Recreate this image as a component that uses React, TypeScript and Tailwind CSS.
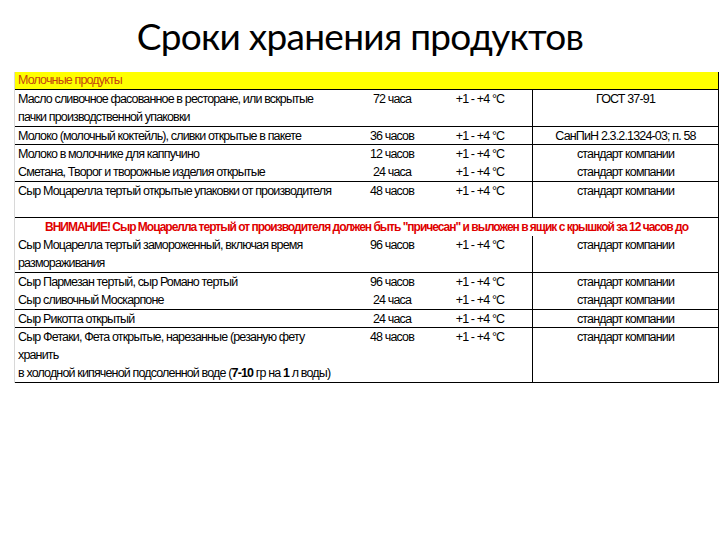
import React from 'react';
import clsx from 'clsx';

type Row = {
  name: React.ReactNode;
  time?: string;
  temp?: string;
  norm?: string;
  h: string;
  border: boolean;
};

const rows: Row[] = [
  {
    name: (
      <>
        Масло сливочное фасованное в ресторане, или вскрытые
        <br />
        пачки производственной упаковки
      </>
    ),
    time: '72 часа',
    temp: '+1 - +4 °C',
    norm: 'ГОСТ 37-91',
    h: 'h-[36px]',
    border: true,
  },
  {
    name: 'Молоко (молочный коктейль), сливки открытые в пакете',
    time: '36 часов',
    temp: '+1 - +4 °C',
    norm: 'СанПиН 2.3.2.1324-03; п. 58',
    h: 'h-[17px]',
    border: true,
  },
  {
    name: 'Молоко в молочнике для каппучино',
    time: '12 часов',
    temp: '+1 - +4 °C',
    norm: 'стандарт компании',
    h: 'h-[18px]',
    border: false,
  },
  {
    name: 'Сметана, Творог и творожные изделия открытые',
    time: '24 часа',
    temp: '+1 - +4 °C',
    norm: 'стандарт компании',
    h: 'h-[18px]',
    border: true,
  },
  {
    name: 'Сыр Моцарелла тертый открытые упаковки от производителя',
    time: '48 часов',
    temp: '+1 - +4 °C',
    norm: 'стандарт компании',
    h: 'h-[35px]',
    border: true,
  },
];

const rows2: Row[] = [
  {
    name: (
      <>
        Сыр Моцарелла тертый замороженный, включая время
        <br />
        размораживания
      </>
    ),
    time: '96 часов',
    temp: '+1 - +4 °C',
    norm: 'стандарт компании',
    h: 'h-[36px]',
    border: true,
  },
  {
    name: 'Сыр Пармезан тертый, сыр Романо тертый',
    time: '96 часов',
    temp: '+1 - +4 °C',
    norm: 'стандарт компании',
    h: 'h-[18px]',
    border: false,
  },
  {
    name: 'Сыр сливочный Москарпоне',
    time: '24 часа',
    temp: '+1 - +4 °C',
    norm: 'стандарт компании',
    h: 'h-[18px]',
    border: true,
  },
  {
    name: 'Сыр Рикотта открытый',
    time: '24 часа',
    temp: '+1 - +4 °C',
    norm: 'стандарт компании',
    h: 'h-[17px]',
    border: true,
  },
  {
    name: (
      <>
        Сыр Фетаки, Фета открытые, нарезанные (резаную фету
        <br />
        хранить
        <br />в холодной кипяченой подсоленной воде (<b>7-10</b> гр на <b>1</b> л воды)
      </>
    ),
    time: '48 часов',
    temp: '+1 - +4 °C',
    norm: 'стандарт компании',
    h: 'h-[54px]',
    border: true,
  },
];

function TableRow({ row }: { row: Row }) {
  return (
    <div className={clsx('flex box-content', row.h, row.border && 'border-b border-black')}>
      <div className="w-[341px] pl-[3px] whitespace-nowrap">{row.name}</div>
      <div className="w-[72px] text-center whitespace-nowrap">{row.time}</div>
      <div className="w-[104px] text-center whitespace-nowrap">{row.temp}</div>
      <div className="w-[186px] border-l border-black text-center whitespace-nowrap">{row.norm}</div>
    </div>
  );
}

export default function App() {
  return (
    <div className="w-[720px] h-[540px] bg-white overflow-hidden">
      <h1
        className="text-center text-[37px] leading-[46px] pt-[13px] tracking-[-0.7px] text-black"
        style={{ fontFamily: 'Lato, "Open Sans", sans-serif' }}
      >
        Сроки хранения продуктов
      </h1>

      <div
        className="ml-[14px] mt-[13px] w-[705px] border-r border-l border-r-black border-l-[#d8d8d8] text-[12.5px] leading-[18px] tracking-[-0.85px] text-black"
        style={{ fontFamily: '"Liberation Sans", Arial, sans-serif' }}
      >
        {/* заголовок группы */}
        <div className="bg-[#ffff00] border-b border-black pl-[3px] h-[18px] leading-[17px] text-[#c4460e]">
          Молочные продукты
        </div>

        {rows.map((r, i) => (
          <TableRow key={i} row={r} />
        ))}

        <div className="h-[18px] text-center text-[12px] tracking-[-1px] font-bold text-[#e00000] whitespace-nowrap overflow-hidden">
          ВНИМАНИЕ! Сыр Моцарелла тертый от производителя должен быть "причесан" и выложен в ящик с крышкой за 12 часов до
        </div>

        {rows2.map((r, i) => (
          <TableRow key={i} row={r} />
        ))}
      </div>
    </div>
  );
}
